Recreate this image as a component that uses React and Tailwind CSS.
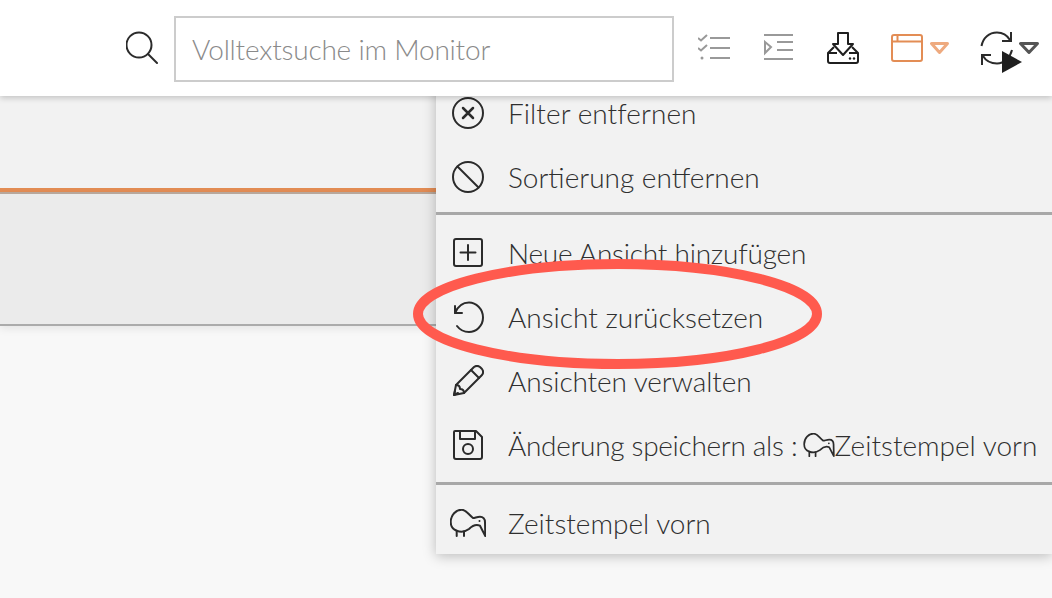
import React from 'react';

const Kiwi = ({ className }) => (
  <svg className={className} viewBox="0 0 36 28" fill="none" stroke="#2b2b2b" strokeWidth="2" strokeLinejoin="round" strokeLinecap="round">
    <path d="M6.700 21.700C2 20 .7 17 .7 13C.7 6 6 .7 11.700 .7C16 .7 18 5 23 9C25 9 27 7.700 30 7.700C33 7.700 35 10 35 13.300L35.300 27L30 16.700C26 15 22 17 19 20C15 23 10 23 6.700 21.700Z" />
    <path d="M6.700 21.700V27M14 22.500V27" />
    <circle cx="29.500" cy="12" r="1" fill="#2b2b2b" stroke="none" />
  </svg>
);

const MenuIcon = ({ children, size = 32 }) => (
  <svg width={size} height={size} viewBox="0 0 32 32" fill="none" stroke="#2b2b2b" strokeWidth="2" strokeLinecap="round" strokeLinejoin="round">
    {children}
  </svg>
);

const Row = ({ icon, children, className = '' }) => (
  <div className={`flex h-16 items-center ${className}`}>
    <div className="flex w-[64px] shrink-0 justify-center -mt-[2px]">{icon}</div>
    <div className="ml-[8px] flex items-center whitespace-nowrap pb-[2px]">{children}</div>
  </div>
);

const Divider = ({ className = '' }) => <div className={`h-[3px] bg-[#a8a8a8] ${className}`} />;

const App = () => {
  return (
    <div className="relative h-[598px] w-[1052px] overflow-hidden bg-[#f8f8f8] font-['Lato','Liberation_Sans',sans-serif] font-light text-[#2f2f2f]">
      <header className="relative z-20 flex h-24 items-center bg-white pl-[126px] shadow-[0_2px_6px_rgba(0,0,0,0.2)]">
        <svg className="mr-4" width="32" height="34" viewBox="0 0 32 34" fill="none" stroke="#2b2b2b" strokeWidth="2" strokeLinecap="round">
          <circle cx="13" cy="14" r="12.500" />
          <path d="M22 23L31 32" />
        </svg>
        <div className="mt-[2px] flex h-[66px] w-[500px] items-center border-2 border-[#ccc] pl-4 text-[28px] tracking-[-0.2px] text-[#8a8a8a]">
          Volltextsuche im Monitor
        </div>

        <svg className="ml-6" width="32" height="30" viewBox="0 0 32 30" fill="none" stroke="#999" strokeWidth="2">
          <path d="M0 5L3 7.500L9 2M0 15L3 17.500L9 12" />
          <circle cx="4" cy="25" r="1.500" fill="#999" stroke="none" />
          <path d="M12 5H32M12 15H32M12 25H32" />
        </svg>
        <svg className="ml-[34px]" width="30" height="28" viewBox="0 0 30 28" fill="none" stroke="#999" strokeWidth="2">
          <path d="M0 1H29M13 8H29M13 16H29M0 25H29" />
          <path d="M1 8L7 13L1 19Z" />
        </svg>
        <svg className="ml-[33px]" width="32" height="32" viewBox="0 0 32 32" fill="none" stroke="#1f1f1f" strokeWidth="2" strokeLinejoin="round">
          <path d="M11 1H21V12H26L16 23L6 12H11Z" />
          <path d="M7 15L1 21V29C1 30 2 31 3 31H29C30 31 31 30 31 29V21L25 15M1 21H10M22 21H31" />
          <circle cx="23" cy="26.500" r="1.200" fill="#1f1f1f" stroke="none" />
          <circle cx="27" cy="26.500" r="1.200" fill="#1f1f1f" stroke="none" />
        </svg>
        <svg className="ml-8" width="32" height="28" viewBox="0 0 32 28" fill="none" stroke="#e38d55" strokeWidth="2">
          <rect x="1" y="1" width="30" height="26" rx="2" />
          <path d="M1 7.500H31M6.500 1V7.500" />
        </svg>
        <svg className="ml-[7px]" width="19" height="12" viewBox="0 0 19 12" fill="none" stroke="#eeaa7f" strokeWidth="3" strokeLinejoin="round">
          <path d="M1.500 1.500H17.500L9.500 10.500Z" />
        </svg>
        <svg className="ml-[31px]" width="34" height="34" viewBox="0 0 34 34" fill="none" stroke="#2b2b2b" strokeWidth="2">
          <path d="M1.500 15C3 7 9 1.500 17 1.500C23 1.500 27 4 30 9" />
          <path d="M31 1V10H22" />
          <path d="M32 19C30 27 24 32.500 17 32.500C11 32.500 6 30 3 25" />
          <path d="M2 34V24H11" />
        </svg>
        <svg className="ml-[5px]" width="20" height="12" viewBox="0 0 20 12" fill="none" stroke="#555" strokeWidth="3" strokeLinejoin="round">
          <path d="M1.500 1.500H18.500L10 10.500Z" />
        </svg>
      </header>

      <div className="h-[92px] bg-[#f2f2f2]" />
      <div className="h-1 bg-[#e38d55]" />
      <div className="h-[134px] border-t-2 border-b-2 border-t-[#b8a79b] border-b-[#ababab] bg-[#ebebeb] shadow-[0_3px_8px_rgba(0,0,0,0.08)]" />

      {/* dropdown sits under the header, so the first row starts behind it */}
      <div className="absolute top-[82px] left-[436px] z-10 h-[472px] w-[616px] bg-[#f2f2f2] text-[28px] shadow-[0_2px_12px_rgba(0,0,0,0.25)]">
        <Row icon={
          <MenuIcon>
            <circle cx="16" cy="16" r="15" />
            <path d="M11 11L21 21M21 11L11 21" strokeWidth="2.500" />
          </MenuIcon>
        }><span className="tracking-[0.07px]">Filter entfernen</span></Row>
        <Row icon={
          <MenuIcon>
            <circle cx="16" cy="16" r="15" />
            <path d="M5.500 5.500L26.500 26.500" />
          </MenuIcon>
        }>Sortierung entfernen</Row>
        <Divider className="mt-[2px]" />
        <Row className="mt-[7px]" icon={
          <MenuIcon>
            <rect x="2" y="2" width="28" height="27" rx="2" />
            <path d="M16 8V23M8.500 15.500H23.500" />
          </MenuIcon>
        }><span className="tracking-[-0.22px]">Neue Ansicht hinzufügen</span></Row>
        <Row icon={
          <MenuIcon>
            <path d="M3 5V12H10" />
            <path d="M3 12C6 5 11 1.500 17 1.500C24 1.500 31 8 31 16.500C31 25 24 31 17 31C12 31 8 29 5 25" />
          </MenuIcon>
        }>Ansicht zurücksetzen</Row>
        <Row icon={
          <MenuIcon>
            <path d="M2 30L4 20L22 2C24 .5 26 .5 28 2L30 4C31.500 6 31.500 8 30 10L12 28Z" />
            <path d="M4 20C7 20 8 21 8 24C11 24 12 25 12 28M19 5L27 13M6 28L2 30L3 26" />
          </MenuIcon>
        }><span className="tracking-[-0.1px]">Ansichten verwalten</span></Row>
        <Row icon={
          <MenuIcon>
            <path d="M3 2H24L30 8V28C30 29 29 30 28 30H4C3 30 2 29 2 28V3C2 2.500 2.500 2 3 2Z" />
            <path d="M8 2V10H23V2" />
            <circle cx="16" cy="20" r="5" />
          </MenuIcon>
        }>
          <span className="tracking-[-0.3px]">Änderung speichern als :&nbsp;</span>
          <Kiwi className="-ml-[2px] h-[24px] w-[32px]" />
          Zeitstempel vorn
        </Row>
        <Divider className="mt-1" />
        <Row className="mt-[5px] pt-1" icon={<Kiwi className="h-[28px] w-[36px]" />}>Zeitstempel vorn</Row>
      </div>

      {/* annotation oval */}
      <svg className="absolute top-[256px] left-[410px] z-30" width="416" height="116" viewBox="0 0 416 116" fill="none">
        <ellipse cx="207.500" cy="58" rx="199.500" ry="50" stroke="#ff5a4e" strokeWidth="10" />
      </svg>

      {/* mouse pointer */}
      <svg className="absolute top-[51px] left-[1002px] z-30" width="20" height="22" viewBox="0 0 20 22">
        <path d="M0 0L20 11L0 22Z" fill="#1f1f1f" />
      </svg>
    </div>
  );
};

export default App;
